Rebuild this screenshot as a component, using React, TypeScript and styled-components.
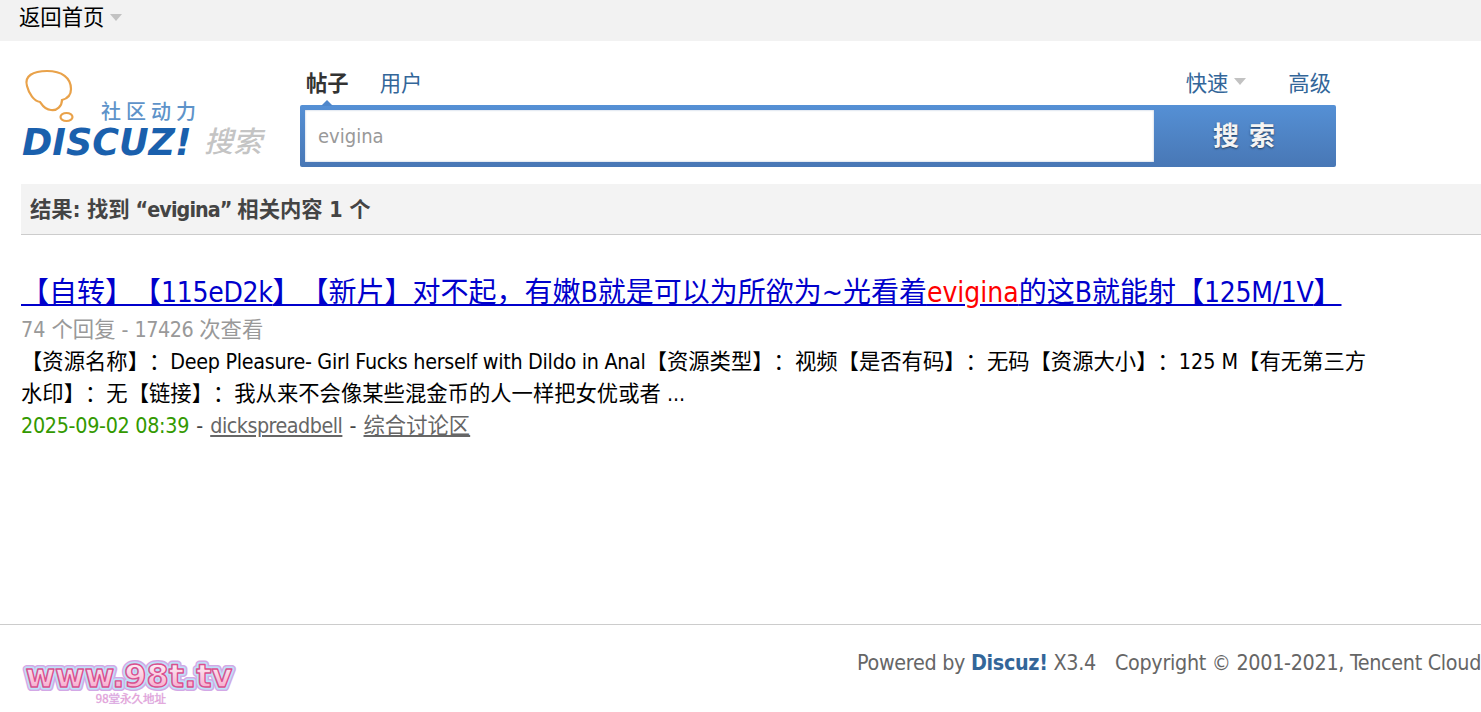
import React from "react";
import styled, { createGlobalStyle } from "styled-components";

const SANS = `"DejaVu Sans Condensed", "Noto Sans CJK SC", sans-serif`;

const Global = createGlobalStyle`
  html, body { margin: 0; padding: 0; background: #fff; overflow: hidden; }
  body { font-family: ${SANS}; font-size: 21.33px; color: #000; text-spacing-trim: space-all; }
`;
const Page = styled.div`width: 1481px; height: 712px; overflow: hidden; display: flex; flex-direction: column;`;
const Lat = styled.span<{ $ls?: number }>`letter-spacing: ${(p) => p.$ls ?? -0.3}px;`;
const TopBar = styled.div`height: 41px; background: #f2f2f2; padding-left: 19px; display: flex; align-items: flex-start; box-sizing: border-box;`;
const TopLink = styled.a`font-size: 21.33px; line-height: 35px; color: #000; display: flex; align-items: center;`;
const Caret = styled.span<{ $ml: number }>`
  display: inline-block; margin-left: ${(p) => p.$ml}px; width: 0; height: 0;
  border-left: 6.5px solid transparent; border-right: 6.5px solid transparent; border-top: 7px solid #c2c2c2;
`;
const Header = styled.div`display: flex; padding: 28px 0 0 21px; height: 143px; box-sizing: border-box;`;
const LogoBox = styled.div`width: 279px; flex: none; svg { display: block; }`;
const SearchCol = styled.div`width: 1036px; flex: none;`;
const Tabs = styled.div`display: flex; align-items: center; height: 36px; padding: 0 5px 12px 6px; box-sizing: border-box; font-size: 21.33px;`;
const TabActive = styled.span`
  position: relative; font-weight: 700; color: #333; margin-right: 31px;
  &::after {
    content: ""; position: absolute; left: 15px; bottom: -9px; width: 0; height: 0;
    border-left: 6px solid transparent; border-right: 6px solid transparent; border-bottom: 6px solid #4f87cb;
  }
`;
const TabLink = styled.a`color: #369;`;
const Spacer = styled.div`flex: 1;`;
const QuickLink = styled.a`color: #369; display: flex; align-items: center; margin-right: 42px;`;
const SearchBox = styled.div`
  height: 62px; display: flex; border-radius: 2px; overflow: hidden;
  background: linear-gradient(#5590d5, #4877b5);
  padding: 5px 0 5px 5px; box-sizing: border-box;
`;
const SearchInput = styled.div`
  flex: 1; background: #fff; padding-left: 13px; font-size: 20px; color: #999; line-height: 53px;
  box-shadow: inset 0 0 2px rgba(70,110,170,.5);
`;
const SearchButton = styled.div`
  width: 182px; flex: none; box-sizing: border-box; padding-left: 8px; text-align: center; color: #f4f4f4; font-size: 26px; font-weight: 700;
  line-height: 48px; letter-spacing: 10px; text-shadow: 0 1px 2px rgba(0,0,0,.55); font-family: "Noto Sans CJK SC", sans-serif;
`;
const ResultBar = styled.div`
  margin-left: 21px; height: 51px; box-sizing: border-box; background: #f3f3f3; border-bottom: 1px solid #ccc;
  padding-left: 9px; font-size: 21.33px; font-weight: 700; color: #444; line-height: 52px;
`;
const Results = styled.div`flex: 1; padding: 38px 0 0 21px; width: 1371px; box-sizing: border-box;`;
const Title = styled.a`display: block; font-size: 28px; line-height: 40px; color: #00c; text-decoration: underline; white-space: nowrap;`;
const Hit = styled.span`color: #f00;`;
const Meta = styled.div`font-size: 21.33px; line-height: 32px; color: #999; margin-top: 1px;`;
const Excerpt = styled.div`font-size: 21.33px; line-height: 32px; color: #000;`;
const Info = styled.div`font-size: 21.33px; line-height: 32px; color: #444; word-spacing: 1px;`;
const Date = styled.span`color: #390; letter-spacing: -0.3px; word-spacing: 0;`;
const GrayLink = styled.a`color: #666; text-decoration: underline;`;
const Footer = styled.div`height: 88px; flex: none; border-top: 1px solid #ccc; display: flex; padding-left: 21px; box-sizing: border-box; overflow: hidden;`;
const FooterLogo = styled.div`width: 221px; flex: none; padding-top: 26px; svg { display: block; }`;
const Copy = styled.div`
  margin-left: 615px; padding-top: 22px; font-size: 21.33px; line-height: 32px; color: #666; white-space: nowrap; letter-spacing: -0.3px;
  b { color: #369; }
`;
const CopyRight = styled.span`margin-left: 19px;`;

const DiscuzLogo = () => (
  <svg width="250" height="95" viewBox="0 0 250 95">
    <path d="M6 17 C3 7 12 2 26 2 C41 2 50 9 50 20 C50 27 45 30 41 31 C41 37 36 42 30 41 C24 41 21 36 19 33 C13 32 8 25 6 17 Z" fill="none" stroke="#e9a24a" strokeWidth="2.2" />
    <ellipse cx="45.5" cy="48" rx="6" ry="4" fill="none" stroke="#e9a24a" strokeWidth="2.2" />
    <text x="80" y="50" fontFamily="'Noto Sans CJK SC', sans-serif" fontSize="20" fontWeight="500" letterSpacing="5" fill="#5e93c9">社区动力</text>
    <text x="1" y="86" fontFamily="'DejaVu Sans', sans-serif" fontSize="36.5" fontWeight="700" fontStyle="italic" letterSpacing="0" fill="#1a60ad">DISCUZ!</text>
    <text x="183" y="83" fontFamily="'Noto Sans CJK SC', sans-serif" fontSize="29" fontWeight="500" fontStyle="italic" fill="#c4c4c4">搜索</text>
  </svg>
);

const BrandLogo = () => (
  <svg width="216" height="56" viewBox="0 0 216 56">
    <defs>
      <linearGradient id="fillPink" x1="0" y1="0" x2="0" y2="1">
        <stop offset="0" stopColor="#fff" />
        <stop offset="1" stopColor="#f59ac4" />
      </linearGradient>
    </defs>
    <g fontFamily="'DejaVu Sans', sans-serif" fontSize="32" fontWeight="700" textAnchor="middle">
      <text x="108" y="36" fill="none" stroke="#d3a8e6" strokeWidth="8" strokeLinejoin="round">www.98t.tv</text>
      <text x="108" y="36" fill="none" stroke="#bfe0f8" strokeWidth="5" strokeLinejoin="round">www.98t.tv</text>
      <text x="108" y="36" fill="url(#fillPink)" stroke="#d9508f" strokeWidth="1.4" strokeLinejoin="round">www.98t.tv</text>
    </g>
    <text x="110" y="52" textAnchor="middle" fontFamily="'Noto Sans CJK SC', sans-serif" fontSize="11.5" fill="#f08cc0" stroke="#d9b5ea" strokeWidth=".4">98堂永久地址</text>
  </svg>
);

export default function App() {
  return (
    <Page>
      <Global />
      <TopBar>
        <TopLink>返回首页<Caret $ml={6} /></TopLink>
      </TopBar>
      <Header>
        <LogoBox><DiscuzLogo /></LogoBox>
        <SearchCol>
          <Tabs>
            <TabActive>帖子</TabActive>
            <TabLink>用户</TabLink>
            <Spacer />
            <QuickLink>快速<Caret $ml={6} /></QuickLink>
            <TabLink>高级</TabLink>
          </Tabs>
          <SearchBox>
            <SearchInput>evigina</SearchInput>
            <SearchButton>搜索</SearchButton>
          </SearchBox>
        </SearchCol>
      </Header>
      <ResultBar>结果: 找到<Lat $ls={-0.9}> “evigina” </Lat>相关内容 1 个</ResultBar>
      <Results>
        <Title>【自转】【<Lat>115eD2k</Lat>】【新片】对不起，有嫩B就是可以为所欲为~光看着<Hit>evigina</Hit>的这B就能射【<Lat>125M/1V</Lat>】</Title>
        <Meta>74 个回复 - <Lat $ls={-0.5}>17426</Lat> 次查看</Meta>
        <Excerpt>【资源名称】：<Lat>Deep Pleasure- Girl Fucks herself with Dildo in Anal</Lat>【资源类型】：视频【是否有码】：无码【资源大小】：125 M【有无第三方水印】：无【链接】：我从来不会像某些混金币的人一样把女优或者 ...</Excerpt>
        <Info><Date>2025-09-02 08:39</Date> - <GrayLink><Lat $ls={-0.5}>dickspreadbell</Lat></GrayLink> - <GrayLink>综合讨论区</GrayLink></Info>
      </Results>
      <Footer>
        <FooterLogo><BrandLogo /></FooterLogo>
        <Copy>Powered by <b>Discuz!</b> X3.4<CopyRight>Copyright © 2001-2021, Tencent Cloud.</CopyRight></Copy>
      </Footer>
    </Page>
  );
}
